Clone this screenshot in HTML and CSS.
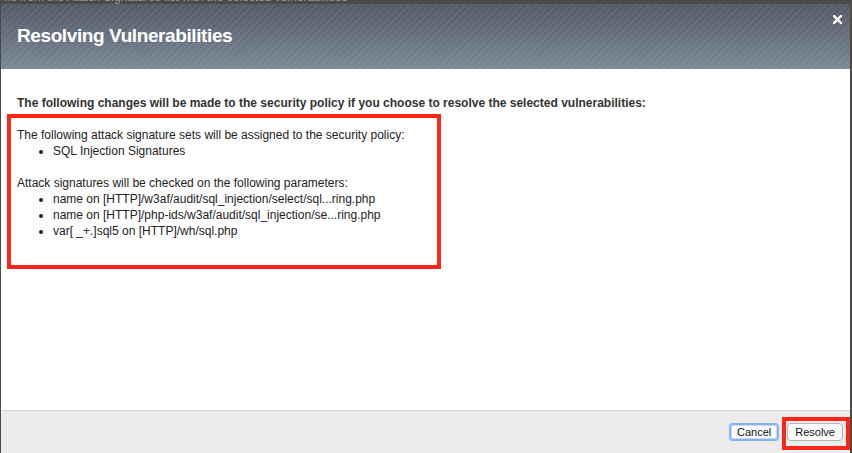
FILE: index.html
```html
<!DOCTYPE html>
<html>
<head>
<meta charset="utf-8">
<link rel="stylesheet" href="styles.css">
</head>
<body>
<div class="backdrop-strip"><span>ns from the Attack Signatures list with the selected vulnerabilities</span></div>
<div class="dialog">
  <div class="dialog-header">
    <h1 class="dialog-title">Resolving Vulnerabilities</h1>
    <button class="close-btn" aria-label="Close">
      <svg width="9" height="9" viewBox="0 0 9 9"><path d="M1 1L8 8M8 1L1 8" stroke="#fff" stroke-width="2.4" stroke-linecap="square"/></svg>
    </button>
  </div>
  <div class="dialog-body">
    <p class="intro">The following changes will be made to the security policy if you choose to resolve the selected vulnerabilities:</p>
    <div class="highlight">
      The following attack signature sets will be assigned to the security policy:
      <ul class="items">
        <li>SQL Injection Signatures</li>
      </ul>
      <br>
      Attack signatures will be checked on the following parameters:
      <ul class="items">
        <li>name on [HTTP]/w3af/audit/sql_injection/select/sql...ring.php</li>
        <li>name on [HTTP]/php-ids/w3af/audit/sql_injection/se...ring.php</li>
        <li>var[ _+.]sql5 on [HTTP]/wh/sql.php</li>
      </ul>
    </div>
  </div>
  <div class="dialog-footer">
    <button class="btn btn-cancel">Cancel</button>
    <span class="highlight-btn"><button class="btn">Resolve</button></span>
  </div>
</div>
</body>
</html>
```
FILE: styles.css
```css
html, body {
  margin: 0;
  padding: 0;
}
body {
  background: #4a4a4a;
  width: 852px;
  height: 453px;
  overflow: hidden;
  font-family: "Liberation Sans", Arial, sans-serif;
}
.backdrop-strip {
  height: 4px;
  overflow: hidden;
  padding-left: 4px;
}
.backdrop-strip span {
  display: block;
  margin-top: -9px;
  font-size: 12px;
  line-height: 12px;
  color: #9a9a9a;
  white-space: nowrap;
}
.dialog {
  margin-left: 1px;
  width: 849px;
  height: 449px;
  background: #fff;
  display: flex;
  flex-direction: column;
}
.dialog-header {
  height: 65px;
  flex: none;
  display: flex;
  align-items: center;
  justify-content: space-between;
  padding: 0 8px 0 16px;
  background:
    repeating-linear-gradient(135deg, rgba(255,255,255,0) 0px, rgba(255,255,255,0) 3px, rgba(255,255,255,0.05) 3px, rgba(255,255,255,0.05) 5px),
    linear-gradient(to bottom, #525b66 0%, #7b8896 100%);
}
.dialog-title {
  margin: 0;
  font-size: 19px;
  letter-spacing: -0.4px;
  font-weight: bold;
  color: #fff;
  padding-bottom: 1px;
}
.close-btn {
  align-self: flex-start;
  margin-top: 11px;
  background: none;
  border: 0;
  padding: 0;
  width: 9px;
  height: 9px;
  display: flex;
}
.dialog-body {
  flex: 1;
  padding: 26px 16px 0 16px;
  font-size: 12px;
  line-height: 16px;
  color: #222;
}
.intro {
  margin: 0 0 3px 0;
  font-weight: bold;
  color: #333;
}
.highlight {
  margin-left: -10px;
  width: 414px;
  border: 4px solid #ff2418;
  padding: 9px 6px 26px 6px;
  color: #222;
}
.items {
  margin: 0;
  padding-left: 36px;
}
.dialog-footer {
  box-sizing: border-box;
  height: 43px;
  flex: none;
  border-top: 1px solid #d6d6d6;
  background: #ececec;
  display: flex;
  justify-content: flex-end;
  align-items: flex-start;
  padding: 6px 0 0 0;
}
.btn {
  font-family: "Liberation Sans", Arial, sans-serif;
  font-size: 11px;
  height: 18px;
  line-height: 16px;
  padding: 0 7px;
  border: 1px solid #b3b3b3;
  border-radius: 4px;
  background: #fff;
  color: #111;
}
.btn-cancel {
  margin-top: 6px;
  margin-right: 3px;
  padding: 0 6px;
  border: 2px solid #86b5ef;
  box-shadow: inset 0 0 0 1px #c9dcf5;
  line-height: 14px;
}
.highlight-btn {
  display: flex;
  border: 4px solid #ff2418;
  padding: 2px 3px 5px 1px;
}
```
